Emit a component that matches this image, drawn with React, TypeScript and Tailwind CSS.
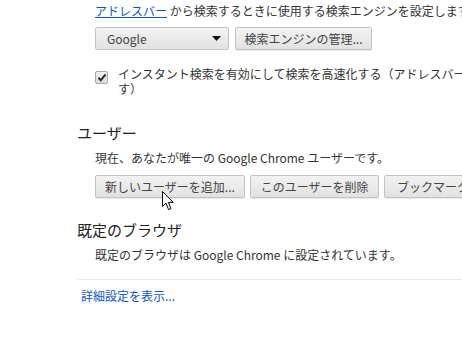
import { ReactNode } from 'react';

function GrayButton({ children, className = '' }: { children: ReactNode; className?: string }) {
  return (
    <div
      className={`flex h-[23px] shrink-0 items-center justify-center whitespace-nowrap rounded-[2px] border border-[#c2c2c2] bg-gradient-to-b from-[#f2f2f2] to-[#e2e2e2] px-[12px] text-[12px] text-[#444] shadow-[0_1px_0_rgba(0,0,0,0.08)] ${className}`}
    >
      {children}
    </div>
  );
}

function Checkbox() {
  return (
    <div className="mt-[5px] flex h-[13px] w-[13px] shrink-0 items-center justify-center rounded-[2px] border border-[#a9a9a9] bg-gradient-to-b from-[#f0f0f0] to-[#d9d9d9]">
      <svg width="10" height="9" viewBox="0 0 10 9">
        <path d="M1.5 4.8 L3.8 7.2 L8.6 1.4" fill="none" stroke="#2b2b2b" strokeWidth="2" />
      </svg>
    </div>
  );
}

function Cursor() {
  return (
    <svg className="absolute left-[162px] top-[191px]" width="13" height="20" viewBox="0 0 13 20">
      <path
        d="M0.5 0.5 L0.5 15.5 L4 12.2 L6.6 18.6 L9 17.6 L6.4 11.4 L11.2 11.4 Z"
        fill="#fff"
        stroke="#000"
        strokeWidth="1"
        strokeLinejoin="round"
      />
    </svg>
  );
}

export default function App() {
  return (
    <div
      className="relative h-[357px] w-[462px] overflow-hidden bg-white text-[12px] text-[#333]"
      style={{ fontFamily: '"Noto Sans CJK JP", "Noto Sans", sans-serif' }}
    >
      <div className="pl-[77px]">
        {/* search engine */}
        <div className="pl-[18px]">
          <div className="mt-[3px] whitespace-nowrap leading-[16px]">
            <span className="text-[#15c] underline">アドレスバー</span>
            <span> から検索するときに使用する検索エンジンを設定します。</span>
          </div>
          <div className="mt-[8px] flex gap-[6px]">
            <div className="flex h-[23px] w-[134px] shrink-0 items-center justify-between rounded-[2px] border border-[#c2c2c2] bg-gradient-to-b from-[#f2f2f2] to-[#e2e2e2] pl-[11px] pr-[7px] text-[#444]">
              <span>Google</span>
              <svg width="9" height="5" viewBox="0 0 9 5">
                <path d="M0 0 L9 0 L4.5 5 Z" fill="#111" />
              </svg>
            </div>
            <GrayButton className="w-[137px]">検索エンジンの管理...</GrayButton>
          </div>
          <div className="mt-[16px] flex items-start gap-[10px]">
            <Checkbox />
            <div className="leading-[15px]">
              <div className="whitespace-nowrap">
                インスタント検索を有効にして検索を高速化する（アドレスバーに入力した内容がすぐに検索されま
              </div>
              <div>す）</div>
            </div>
          </div>
        </div>

        {/* users */}
        <h3 className="mt-[27px] text-[15px] font-normal leading-[20px] text-[#222]">ユーザー</h3>
        <div className="pl-[18px]">
          <div className="mt-[7px] whitespace-nowrap leading-[16px]">
            現在、あなたが唯一の Google Chrome ユーザーです。
          </div>
          <div className="mt-[9px] flex gap-[5px]">
            <GrayButton className="w-[150px]">新しいユーザーを追加...</GrayButton>
            <GrayButton className="w-[129px]">このユーザーを削除</GrayButton>
            <GrayButton>ブックマークと設定をインポート...</GrayButton>
          </div>
        </div>

        {/* default browser */}
        <h3 className="mt-[22px] text-[15px] font-normal leading-[20px] text-[#222]">既定のブラウザ</h3>
        <div className="pl-[18px]">
          <div className="mt-[7px] whitespace-nowrap leading-[16px]">
            既定のブラウザは Google Chrome に設定されています。
          </div>
        </div>

        <div className="mt-[16px] border-t border-[#ebebeb]" />
        <div className="mt-[8px] pl-[4px] leading-[16px] text-[#15c]">詳細設定を表示...</div>
      </div>
      <Cursor />
    </div>
  );
}
